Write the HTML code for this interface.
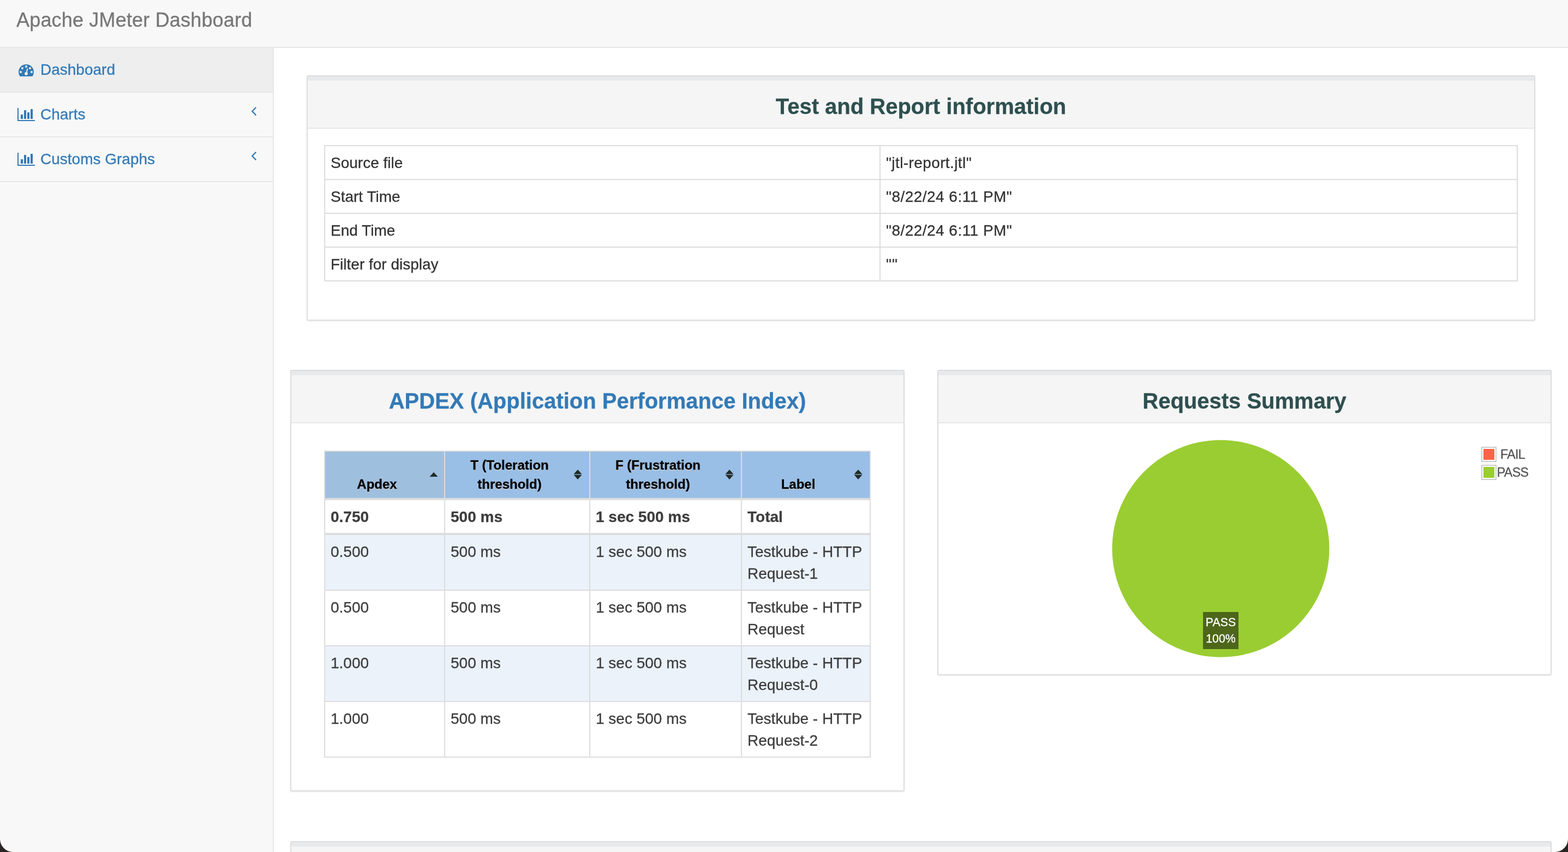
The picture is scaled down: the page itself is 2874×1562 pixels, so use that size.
<!DOCTYPE html>
<html lang="en">
<head>
<meta charset="utf-8">
<title>Apache JMeter Dashboard</title>
<style>
*{box-sizing:border-box}
html,body{margin:0;padding:0}
html{width:2874px;height:1562px;overflow:hidden}
body{width:2874px;height:1562px;overflow:hidden;position:relative;background:#f8f8f8;
  font-family:"Liberation Sans",Arial,sans-serif;font-size:28px;line-height:40px;color:#333;-webkit-text-stroke:.3px}
a{text-decoration:none;color:#337ab7}
.abs{position:absolute}
#nav,#side,#page{will-change:transform}
#nav{position:absolute;left:0;top:0;width:2874px;height:88px;background:#f8f8f8;border-bottom:2px solid #e7e7e7}
#brand{position:absolute;left:30px;top:17px;font-size:36px;line-height:40px;color:#777;white-space:nowrap;letter-spacing:.18px}
#side{position:absolute;left:0;top:88px;width:500px}
#side .it{position:relative;height:82px;border-bottom:2px solid #e7e7e7}
#side .it.act{background:#eee}
#side .it .tx{position:absolute;left:74px;top:20px;font-size:28px;line-height:40px;color:#337ab7;white-space:nowrap}
#side .it svg{position:absolute}
#page{position:absolute;left:500px;top:88px;width:2374px;height:1474px;background:#fff;border-left:2px solid #e7e7e7;overflow:hidden}
.panel{position:absolute;background:#fff;border:2px solid #ddd;border-radius:3px;box-shadow:0 2px 2px rgba(0,0,0,.05)}
.phead{position:absolute;left:0;top:0;right:0;height:96px;background:#f5f5f5;border-top:8px solid #e8e9eb;border-bottom:2px solid #e6e7e9}
.ptitle{position:absolute;left:0;right:0;top:24px;text-align:center;font-weight:bold;font-size:40px;line-height:46px;color:#2f4f4f;white-space:nowrap}
.ptitle a{color:#337ab7}
table{border-collapse:separate;border-spacing:0}
#info{position:absolute;left:30px;top:126px;width:2188px;border-top:2px solid #ddd;border-left:2px solid #ddd}
#info td{height:62px;padding:11px 10px 9px 10px;border-right:2px solid #ddd;border-bottom:2px solid #ddd;line-height:40px;vertical-align:top;white-space:nowrap}
#apdex{position:absolute;left:60px;top:146px;border-top:2px solid #ddd;border-left:2px solid #ddd;color:#3d3d3d}
#apdex th{position:relative;height:89px;padding:8px 36px 8px 8px;background:#99bfe6;color:#000;font-weight:bold;font-size:24px;line-height:34.28px;text-align:center;vertical-align:bottom;border-right:2px solid #ddd;border-bottom:4px solid #ddd;text-shadow:0 2px 0 rgba(204,204,204,.7)}
#apdex th.asc{background:#9fbfdf}
#apdex th svg{position:absolute;right:13px;top:32px}
#apdex th.asc svg{right:11px}
#apdex td{padding:11px 10px 9px 10px;border-right:2px solid #ddd;border-bottom:2px solid #ddd;line-height:40px;vertical-align:top;background:#fff}
#apdex tr.tot td{font-weight:bold;border-bottom:4px solid #ddd;height:64px}
#apdex tr.odd td{background:#ebf2fa}
#apdex tr.r td{height:102px}

#plabel{left:485px;top:442px;width:65px;height:68px;background:#4d6619;color:#fff;font-size:21.33px;line-height:30px;text-align:center;padding:4px 0;white-space:nowrap}
.lg{width:100px;height:28px}
.lg .sw{position:absolute;left:0;top:0;width:28px;height:28px;border:2px solid #ccc;padding:2px}
.lg .sw i{display:block;width:20px;height:20px}
.lg .lt{position:absolute;top:-2px;font-size:23.33px;line-height:33px;color:#545454;text-align:center;white-space:nowrap;letter-spacing:-.8px}
.corner{position:absolute;bottom:0;width:24px;height:24px}
</style>
</head>
<body>
<div id="nav"><a id="brand">Apache JMeter Dashboard</a></div>
<div id="side">
  <div class="it act"><svg style="left:34px;top:30px" width="28" height="22" viewBox="0 256 1792 1408"><path fill="#337ab7" fill-rule="evenodd" d="M384 1152q0-53-37.5-90.5t-90.5-37.5-90.5 37.5-37.5 90.5 37.5 90.5 90.5 37.5 90.5-37.5 37.5-90.5zm192-448q0-53-37.5-90.5t-90.5-37.5-90.5 37.5-37.5 90.5 37.5 90.5 90.5 37.5 90.5-37.5 37.5-90.5zm428 481l101-382q6-26-7.5-48.5t-38.5-29.5-48 6.5-30 39.5l-101 382q-60 5-107 43.5t-63 98.5q-20 77 20 146t117 89 146-20 89-117q16-60-6-117t-72-91zm660-33q0-53-37.5-90.5t-90.5-37.5-90.5 37.5-37.5 90.5 37.5 90.5 90.5 37.5 90.5-37.5 37.5-90.5zm-640-640q0-53-37.5-90.5t-90.5-37.5-90.5 37.5-37.5 90.5 37.5 90.5 90.5 37.5 90.5-37.5 37.5-90.5zm448 192q0-53-37.5-90.5t-90.5-37.5-90.5 37.5-37.5 90.5 37.5 90.5 90.5 37.5 90.5-37.5 37.5-90.5zm320 448q0 261-141 483-19 29-54 29h-1402q-35 0-54-29-141-221-141-483 0-182 71-348t191-286 286-191 348-71 348 71 286 191 191 286 71 348z"/></svg><span class="tx">Dashboard</span></div>
  <div class="it"><svg style="left:32px;top:28px" width="32" height="24" viewBox="0 128 2048 1536"><path fill="#337ab7" d="M640 896v512h-256v-512h256zm384-512v1024h-256v-1024h256zm1024 1152v128h-2048v-1536h128v1408h1920zm-640-896v768h-256v-768h256zm384-384v1152h-256v-1152h256z"/></svg><span class="tx">Charts</span><svg style="left:456px;top:22px" width="20" height="28" viewBox="456 192 20 28"><polyline fill="none" stroke="#337ab7" stroke-width="2.3" stroke-miterlimit="10" points="469.3,196.7 462.3,204.05 469.3,211.4"/></svg></div>
  <div class="it"><svg style="left:32px;top:28px" width="32" height="24" viewBox="0 128 2048 1536"><path fill="#337ab7" d="M640 896v512h-256v-512h256zm384-512v1024h-256v-1024h256zm1024 1152v128h-2048v-1536h128v1408h1920zm-640-896v768h-256v-768h256zm384-384v1152h-256v-1152h256z"/></svg><span class="tx">Customs Graphs</span><svg style="left:456px;top:22px" width="20" height="28" viewBox="456 192 20 28"><polyline fill="none" stroke="#337ab7" stroke-width="2.3" stroke-miterlimit="10" points="469.3,196.7 462.3,204.05 469.3,211.4"/></svg></div>
</div>
<div id="page">
  <!-- panel 1: x 562..2814 abs => rel to page (500 + 2 border) -->
  <div class="panel" id="p1" style="left:60px;top:50px;width:2252px;height:450px">
    <div class="phead"><div class="ptitle">Test and Report information</div></div>
    <table id="info">
      <colgroup><col style="width:1018px"><col></colgroup>
      <tr><td>Source file</td><td style="letter-spacing:.4px">"jtl-report.jtl"</td></tr>
      <tr><td>Start Time</td><td style="letter-spacing:.47px">"8/22/24 6:11 PM"</td></tr>
      <tr><td>End Time</td><td style="letter-spacing:.47px">"8/22/24 6:11 PM"</td></tr>
      <tr><td>Filter for display</td><td style="letter-spacing:1px">""</td></tr>
    </table>
  </div>
  <div class="panel" id="p2" style="left:30px;top:590px;width:1126px;height:773px">
    <div class="phead"><div class="ptitle"><a>APDEX (Application Performance Index)</a></div></div>
    <table id="apdex">
      <colgroup><col style="width:220px"><col style="width:266px"><col style="width:278px"><col style="width:236px"></colgroup>
      <thead><tr>
        <th class="asc">Apdex<svg width="16" height="20" viewBox="0 0 16 20"><path fill="#222b28" d="M0.5 14L8 5.8 15.5 14z"/></svg></th>
        <th>T (Toleration threshold)<svg width="16" height="20" viewBox="0 0 16 20"><path fill="#222b28" d="M0.5 9.2L8 1 15.5 9.2zM0.5 10.6L8 18.9 15.5 10.6z"/></svg></th>
        <th>F (Frustration threshold)<svg width="16" height="20" viewBox="0 0 16 20"><path fill="#222b28" d="M0.5 9.2L8 1 15.5 9.2zM0.5 10.6L8 18.9 15.5 10.6z"/></svg></th>
        <th>Label<svg width="16" height="20" viewBox="0 0 16 20"><path fill="#222b28" d="M0.5 9.2L8 1 15.5 9.2zM0.5 10.6L8 18.9 15.5 10.6z"/></svg></th>
      </tr></thead>
      <tbody>
      <tr class="tot"><td>0.750</td><td>500 ms</td><td>1 sec 500 ms</td><td>Total</td></tr>
      <tr class="r odd"><td>0.500</td><td>500 ms</td><td>1 sec 500 ms</td><td>Testkube - HTTP Request-1</td></tr>
      <tr class="r"><td>0.500</td><td>500 ms</td><td>1 sec 500 ms</td><td>Testkube - HTTP Request</td></tr>
      <tr class="r odd"><td>1.000</td><td>500 ms</td><td>1 sec 500 ms</td><td>Testkube - HTTP Request-0</td></tr>
      <tr class="r"><td>1.000</td><td>500 ms</td><td>1 sec 500 ms</td><td>Testkube - HTTP Request-2</td></tr>
      </tbody>
    </table>
  </div>
  <div class="panel" id="p3" style="left:1216px;top:590px;width:1126px;height:560px">
    <div class="phead"><div class="ptitle">Requests Summary</div></div>
    <svg class="abs" style="left:0;top:96px" width="1122" height="460" viewBox="1720 776 1122 460"><circle cx="2237.5" cy="1005.75" r="199" fill="#9acd32"/></svg>
    <div class="abs" id="plabel">PASS<br>100%</div>
    <div class="abs lg" style="left:995px;top:139px"><span class="sw"><i style="background:#ff6347"></i></span><span class="lt" style="left:28px;width:59px">FAIL</span></div>
    <div class="abs lg" style="left:995px;top:172px"><span class="sw"><i style="background:#9acd32"></i></span><span class="lt" style="left:28px;width:59px">PASS</span></div>

  </div>
  <div class="panel" id="p4" style="left:30px;top:1454px;width:2312px;height:200px">
    <div class="phead"></div>
  </div>
</div>
<svg class="corner" style="left:0" viewBox="0 0 24 24"><path fill="#2a2522" d="M0 0v24h24A24 24 0 0 1 0 0z"/></svg>
<svg class="corner" style="right:0" viewBox="0 0 24 24"><path fill="#2a2522" d="M24 0v24h-24A24 24 0 0 0 24 0z"/></svg>
<script>
(function(){try{var w=window.innerWidth||0;if(w>200){var r=w/2874;if(Math.abs(r-1)>0.005){document.documentElement.style.zoom=r;}}}catch(e){}})();
</script>
</body>
</html>
